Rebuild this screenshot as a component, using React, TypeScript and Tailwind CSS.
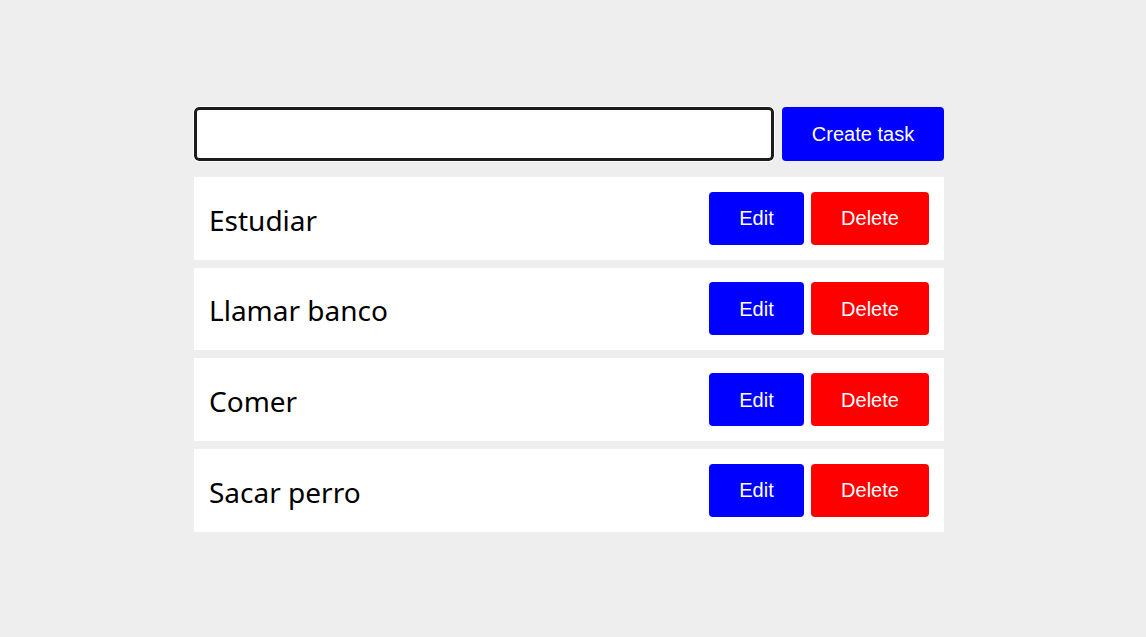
import React from "react";

const tasks = ["Estudiar", "Llamar banco", "Comer", "Sacar perro"];

export default function App() {
  return (
    <div className="min-h-screen w-full bg-[#eeeeee] pt-[107px] pl-[194px]">
      <div className="w-[750px] flex flex-col">
        <div className="flex gap-[8px] h-[54px]">
          <input
            className="flex-1 h-[54px] bg-white border-[3px] border-[#1c1c1c] rounded-[5px] outline-[1.5px] outline-solid outline-white"
            style={{ fontFamily: "'Liberation Sans', Arial, sans-serif" }}
          />
          <button
            className="w-[162px] h-[54px] bg-[#0000ff] text-white text-[20px] rounded-[4px]"
            style={{ fontFamily: "'Liberation Sans', Arial, sans-serif" }}
          >
            Create task
          </button>
        </div>
        <div className="mt-[16px] flex flex-col gap-[8px]">
          {tasks.map((t) => (
            <div
              key={t}
              className="h-[82.67px] bg-white flex items-center justify-between pl-[15px] pr-[15px]"
            >
              <span
                className="text-[28px] text-black pt-[3px]"
                style={{ fontFamily: "'Noto Sans', 'Open Sans', sans-serif" }}
              >
                {t}
              </span>
              <div className="flex gap-[7px]">
                <button
                  className="w-[95px] h-[53px] bg-[#0000ff] text-white text-[20px] rounded-[4px]"
                  style={{ fontFamily: "'Liberation Sans', Arial, sans-serif" }}
                >
                  Edit
                </button>
                <button
                  className="w-[118px] h-[53px] bg-[#ff0000] text-white text-[20px] rounded-[4px]"
                  style={{ fontFamily: "'Liberation Sans', Arial, sans-serif" }}
                >
                  Delete
                </button>
              </div>
            </div>
          ))}
        </div>
      </div>
    </div>
  );
}
